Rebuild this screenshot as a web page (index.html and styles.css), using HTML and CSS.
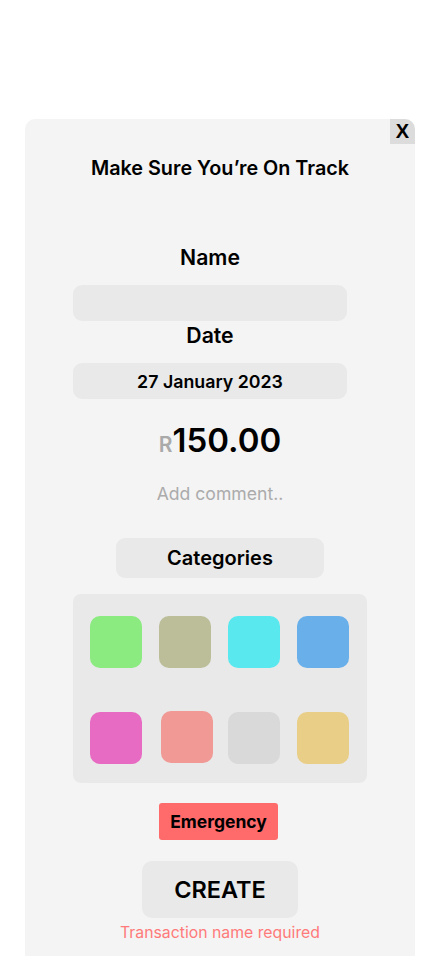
FILE: index.html
```html
<!DOCTYPE html>
<html>
<head>
<meta charset="utf-8">
<link rel="stylesheet" href="styles.css">
</head>
<body>
<div class="card">
  <button class="close">X</button>
  <h1 class="title">Make Sure You’re On Track</h1>
  <div class="fields">
    <div class="label label-name">Name</div>
    <div class="input"></div>
    <div class="label label-date">Date</div>
    <div class="input date">27 January 2023</div>
  </div>
  <div class="amount"><span class="currency">R</span><span class="value">150.00</span></div>
  <div class="comment">Add comment..</div>
  <div class="categories">Categories</div>
  <div class="grid">
    <div class="swatch c1"></div>
    <div class="swatch c2"></div>
    <div class="swatch c3"></div>
    <div class="swatch c4"></div>
    <div class="swatch c5"></div>
    <div class="swatch c6"></div>
    <div class="swatch c7"></div>
    <div class="swatch c8"></div>
  </div>
  <div class="tag">Emergency</div>
  <div class="create">CREATE</div>
  <div class="error">Transaction name required</div>
</div>
</body>
</html>
```
FILE: styles.css
```css
html, body {
  margin: 0;
  padding: 0;
  background: #ffffff;
  font-family: Inter, "Noto Sans", sans-serif;
  color: #000;
}
body {
  height: 956px;
  overflow: hidden;
}
.card {
  position: relative;
  margin: 119px 0 0 25px;
  width: 390px;
  height: 837px;
  background: #f4f4f4;
  border-radius: 10px 10px 0 0;
  display: flex;
  flex-direction: column;
  align-items: center;
  overflow: hidden;
}
.close {
  position: absolute;
  top: 0;
  right: 0;
  width: 25px;
  height: 25px;
  border: none;
  padding: 0;
  background: #dcdcdc;
  font-family: "Liberation Sans", Arial, sans-serif;
  font-weight: 700;
  font-size: 20px;
  line-height: 25px;
  color: #000;
}
.title {
  margin: 37px 0 0;
  font-size: 19.8px;
  line-height: 24px;
  font-weight: 600;
}
.fields {
  align-self: flex-start;
  margin-left: 48px;
  width: 274px;
  display: flex;
  flex-direction: column;
  align-items: center;
}
.label {
  font-size: 21.2px;
  line-height: 24px;
  font-weight: 600;
}
.label-name { margin-top: 65px; }
.label-date { margin-top: 2px; }
.input {
  margin-top: 16px;
  width: 100%;
  height: 36px;
  border-radius: 9px;
  background: #e9e9e9;
}
.date {
  display: flex;
  align-items: center;
  justify-content: center;
  font-size: 17.8px;
  font-weight: 600;
}
.amount {
  margin-top: 21px;
  height: 40px;
  display: flex;
  align-items: baseline;
  line-height: 40px;
}
.currency {
  font-size: 21px;
  font-weight: 600;
  color: #aaaaaa;
}
.value {
  font-size: 33px;
  font-weight: 600;
}
.comment {
  margin-top: 23px;
  font-size: 17.6px;
  line-height: 22px;
  color: #ababab;
}
.categories {
  margin-top: 33px;
  width: 208px;
  height: 40px;
  border-radius: 9px;
  background: #e9e9e9;
  display: flex;
  align-items: center;
  justify-content: center;
  font-size: 20px;
  font-weight: 600;
}
.grid {
  margin-top: 16px;
  width: 294px;
  box-sizing: border-box;
  padding: 22px 18px 19px 17px;
  border-radius: 8px;
  background: #e9e9e9;
  display: grid;
  grid-template-columns: repeat(4, 52px);
  column-gap: 17px;
  row-gap: 44px;
}
.swatch {
  width: 52px;
  height: 52px;
  border-radius: 10px;
}
.c1 { background: #8bea80; }
.c2 { background: #bbbe98; }
.c3 { background: #58e8ee; }
.c4 { background: #69afea; }
.c5 { background: #e76bc2; }
.c6 { background: #f09995; transform: translate(2px, -1px); }
.c7 { background: #d9d9d9; }
.c8 { background: #e9ce87; }
.tag {
  margin: 20px 3px 0 0;
  width: 119px;
  height: 37px;
  border-radius: 3px;
  background: #ff6b6b;
  display: flex;
  align-items: center;
  justify-content: center;
  font-size: 17.5px;
  font-weight: 700;
}
.create {
  margin-top: 21px;
  width: 156px;
  height: 57px;
  border-radius: 10px;
  background: #e9e9e9;
  display: flex;
  align-items: center;
  justify-content: center;
  font-size: 23.5px;
  font-weight: 600;
}
.error {
  margin-top: 6px;
  font-size: 15.8px;
  line-height: 18px;
  color: #ff7a7a;
}
```
